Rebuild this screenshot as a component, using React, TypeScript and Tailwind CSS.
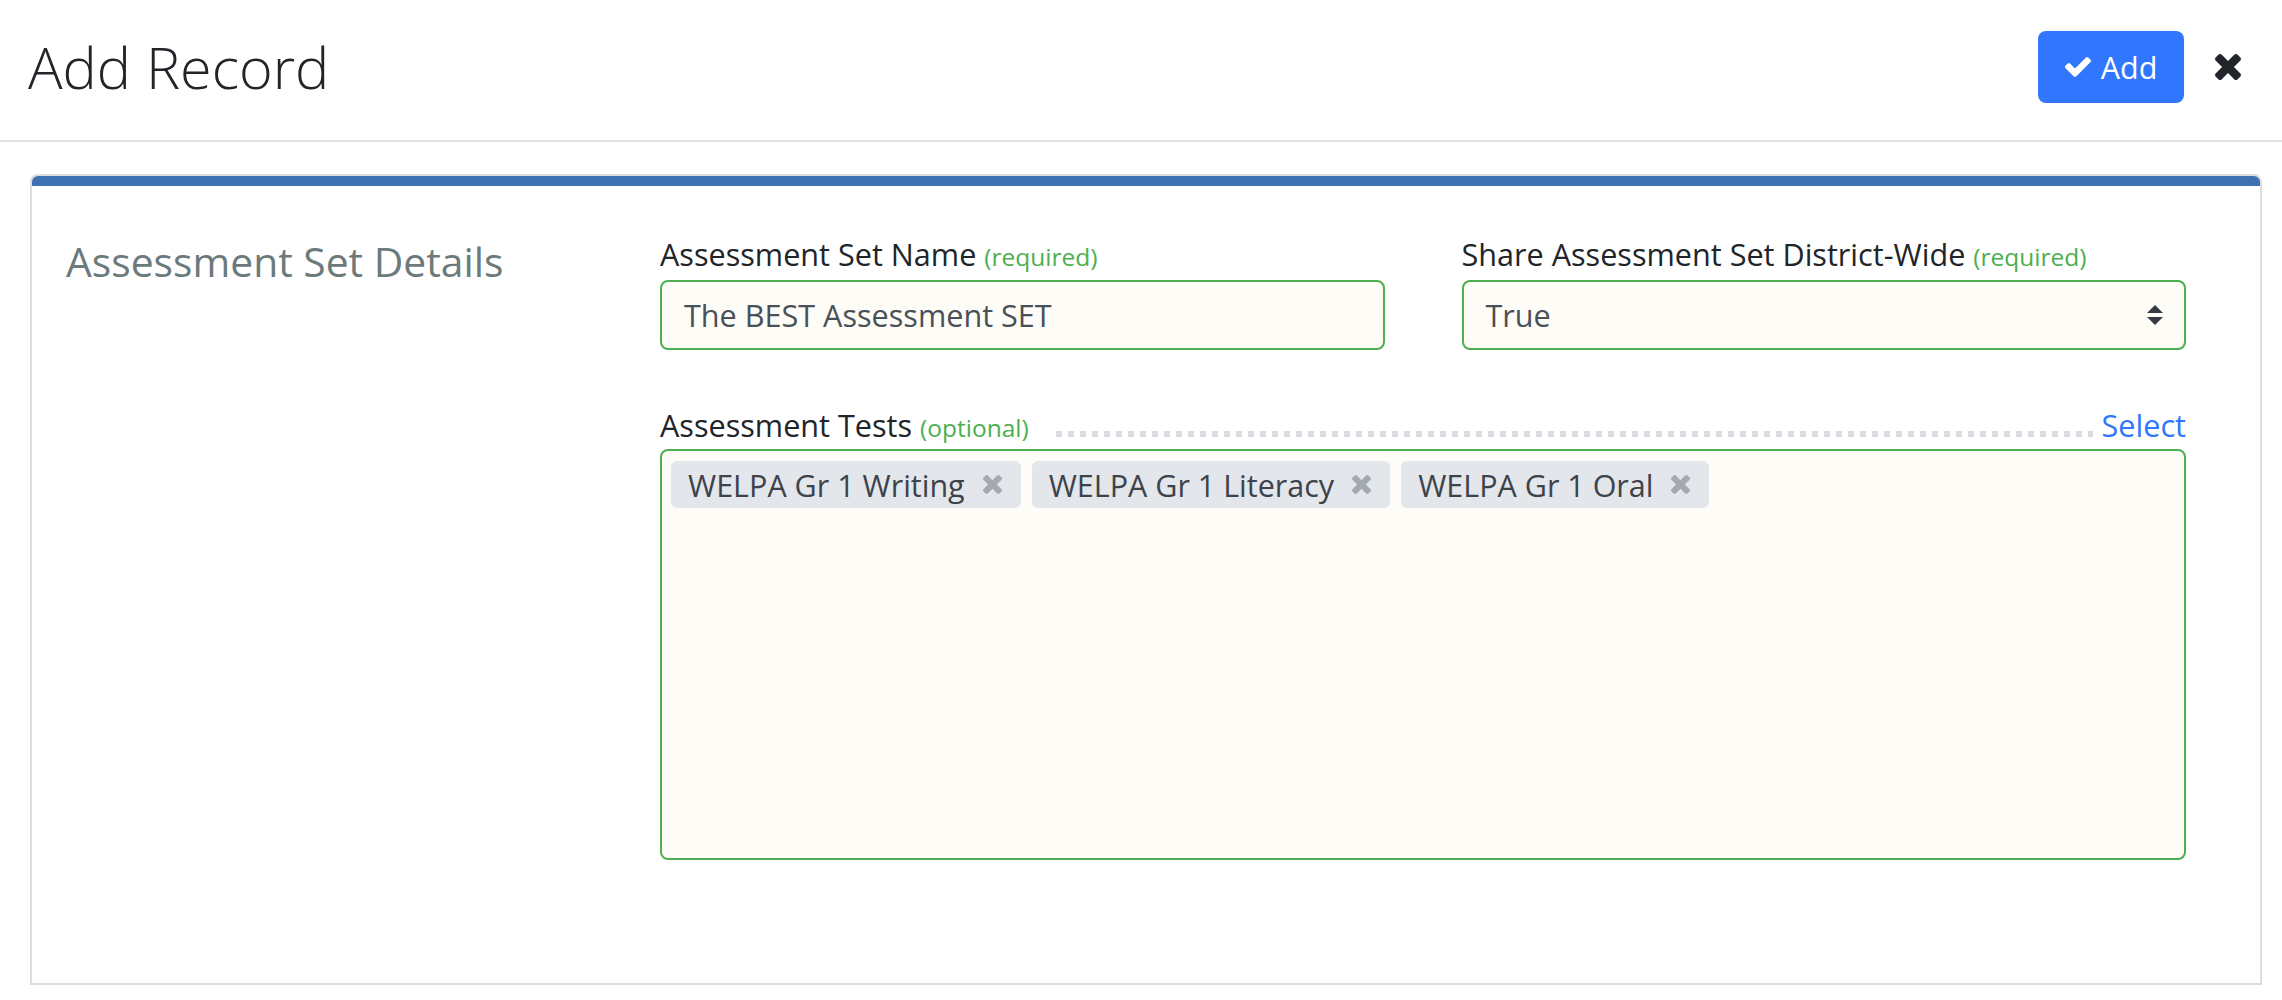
import React from "react";

const TIMES_D =
  "M1298 1322q0 40-28 68l-136 136q-28 28-68 28t-68-28l-294-294-294 294q-28 28-68 28t-68-28l-136-136q-28-28-28-68t28-68l294-294-294-294q-28-28-28-68t28-68l136-136q28-28 68-28t68 28l294 294 294-294q28-28 68-28t68 28l136 136q28 28 28 68t-28 68l-294 294 294 294q28 28 28 68z";
const CHECK_D =
  "M1671 566q0 40-28 68l-724 724-136 136q-28 28-68 28t-68-28l-136-136-362-362q-28-28-28-68t28-68l136-136q28-28 68-28t68 28l294 295 656-657q28-28 68-28t68 28l136 136q28 28 28 68z";

function Times({ size, color }: { size: number; color: string }) {
  return (
    <svg width={size} height={size} viewBox="110 366 1188 1188" fill={color}>
      <path d={TIMES_D} />
    </svg>
  );
}

function Tag({ label }: { label: string }) {
  return (
    <div className="h-[47px] rounded-[6px] bg-[#e3e6ea] pl-[17px] pr-[19px] flex items-center gap-[18px] text-[30.5px] leading-[40px] text-[#3d434a]">
      <span>{label}</span>
      <Times size={19} color="#a3a9b0" />
    </div>
  );
}

export default function App() {
  return (
    <div className="w-full min-h-[1000px] bg-white font-['Open_Sans',sans-serif] text-[#212529]">
      {/* Header */}
      <div className="h-[142px] flex items-center justify-between pl-[28px] pr-[41px] pb-[6px] border-b-2 border-[#dee2e6]">
        <h1 className="text-[57.5px] leading-[56px] font-light text-[#212529] mt-[-1px]">Add Record</h1>
        <div className="flex items-center gap-[31px]">
          <button className="h-[72px] w-[146px] rounded-[8px] bg-[#3176fe] flex items-center justify-center gap-[10px] text-white text-[30.5px] leading-[40px]">
            <svg width="26" height="20" viewBox="121 334 1550 1188" fill="#ffffff">
              <path d={CHECK_D} />
            </svg>
            <span>Add</span>
          </button>
          <Times size={26} color="#212529" />
        </div>
      </div>

      {/* Card */}
      <div className="mt-[32px] ml-[30px] mr-[20px] border-2 border-[#dddddd] rounded-t-[8px] overflow-hidden">
        <div className="h-[10px] bg-[#3e71b1]" />
        <div className="flex pl-[34px] pt-[50px] pb-[123px]">
          <div className="w-[594px] shrink-0">
            <h2 className="mt-[1px] text-[40.8px] leading-[48px] text-[#6c7a7b]">Assessment Set Details</h2>
          </div>
          <div className="w-[1526px] shrink-0">
            <div className="grid grid-cols-2 gap-x-[77px]">
              <div>
                <div className="text-[30.6px] leading-[36px] mb-[5px] text-[#212529]">
                  Assessment Set Name <span className="text-[24.5px] text-[#4caf50]">(required)</span>
                </div>
                <div className="h-[70px] border-2 border-[#4caf50] rounded-[8px] bg-[#fdfcf7] px-[22px] flex items-center text-[30.6px] leading-[45px] text-[#495057]">
                  The BEST Assessment SET
                </div>
              </div>
              <div>
                <div className="text-[30.6px] leading-[36px] mb-[5px] text-[#212529]">
                  Share Assessment Set District-Wide <span className="text-[24.5px] text-[#4caf50]">(required)</span>
                </div>
                <div className="h-[70px] border-2 border-[#4caf50] rounded-[8px] bg-[#fdfcf7] pl-[22px] pr-[21px] flex items-center justify-between text-[30.6px] leading-[45px] text-[#495057]">
                  <span>True</span>
                  <svg width="16" height="20" viewBox="0 0 4 5" fill="#343a40">
                    <path d="M2 0L0 2h4zm0 5L0 3h4z" />
                  </svg>
                </div>
              </div>
            </div>

            <div className="mt-[57px] flex items-start">
              <div className="text-[30.6px] leading-[36px] text-[#212529] whitespace-nowrap">
                Assessment Tests <span className="text-[24.5px] text-[#4caf50]">(optional)</span>
              </div>
              <div className="flex-1 ml-[27px] mr-[9px] mt-[24px] h-[6px] bg-[linear-gradient(to_right,#d9dde1_6px,transparent_6px)] bg-[length:12px_6px] bg-repeat-x" />
              <div className="text-[30.6px] leading-[36px] text-[#3176fe]">Select</div>
            </div>
            <div className="mt-[3px] h-[411px] border-2 border-[#4caf50] rounded-[8px] bg-[#fdfcf7] pl-[9px] pr-[9px] pt-[10px] flex flex-wrap content-start items-start gap-[11px]">
              <Tag label="WELPA Gr 1 Writing" />
              <Tag label="WELPA Gr 1 Literacy" />
              <Tag label="WELPA Gr 1 Oral" />
            </div>
          </div>
        </div>
      </div>
    </div>
  );
}
